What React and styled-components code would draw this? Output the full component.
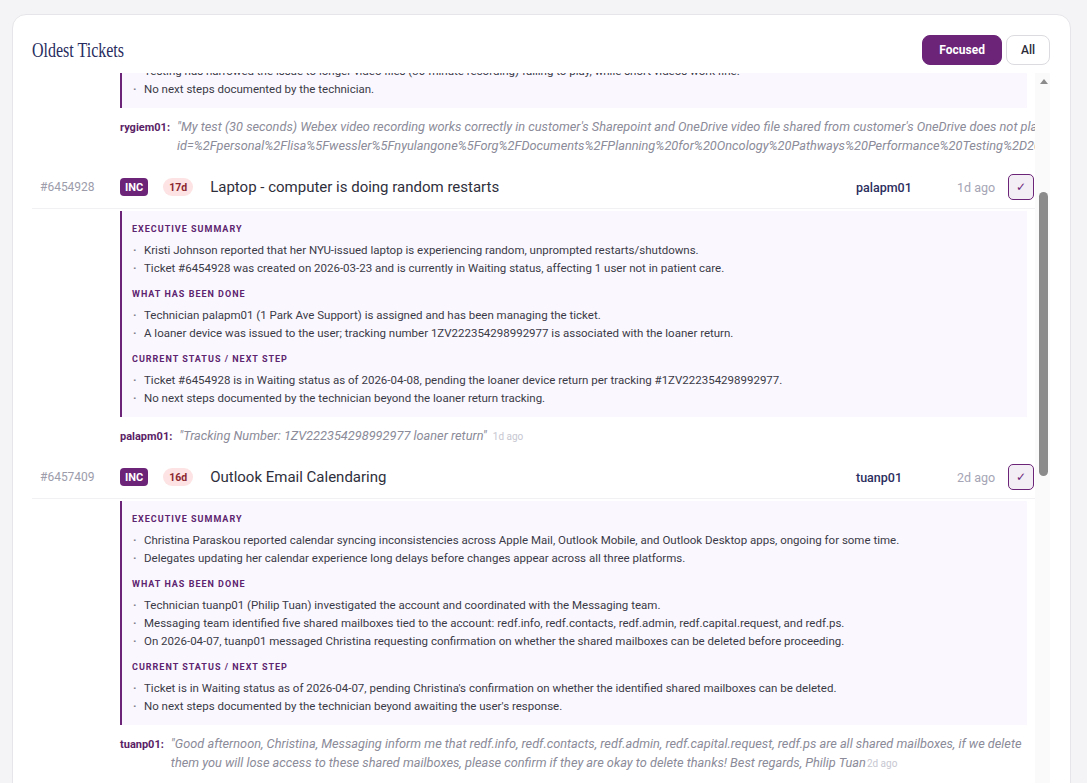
import React, { useLayoutEffect, useRef, useState } from 'react'
import styled, { createGlobalStyle } from 'styled-components'

const tickets = [
  {
    id: '#6449185',
    title: "Webex recordings won't play from shared OneDrive",
    age: '19d',
    assignee: 'rygiem01',
    ago: '1d ago',
    sections: [
      {
        title: 'Executive Summary',
        items: [
          'Lisa Wessler reported that Webex meeting recordings saved to OneDrive fail to play when shared with colleagues.',
          'Ticket #6449185 was created on 2026-03-21 and is currently in Waiting status, affecting 1 user not in patient care.',
          'The user needs the recordings for the Oncology Pathways performance testing project.',
        ],
      },
      {
        title: 'What Has Been Done',
        items: [
          'Technician rygiem01 (Web Conferencing Support) is assigned and has been managing the ticket.',
          "A test recording was shared from the technician's OneDrive and from the customer's OneDrive for comparison.",
          'Recordings were re-uploaded to SharePoint to rule out a file corruption issue.',
        ],
      },
      {
        title: 'Current Status / Next Step',
        items: [
          'Ticket #6449185 is in Waiting status as of 2026-04-08, pending further testing with the customer.',
          'Testing has narrowed the issue to longer video files (30-minute recording) failing to play, while short videos work fine.',
          'No next steps documented by the technician.',
        ],
      },
    ],
    comment: {
      author: 'rygiem01:',
      text: "\"My test (30 seconds) Webex video recording works correctly in customer's Sharepoint and OneDrive video file shared from customer's OneDrive does not play. id=%2Fpersonal%2Flisa%5Fwessler%5Fnyulangone%5Forg%2FDocuments%2FPlanning%20for%20Oncology%20Pathways%20Performance%20Testing%2D2026%2FRecordings%2FWebex%20Session%2030%20Minutes%2Emp4&parent=%2Fpersonal%2Flisa%5Fwessler%5Fnyulangone%5Forg%2FDocuments\"",
      ago: '1d ago',
    },
  },
  {
    id: '#6454928',
    title: 'Laptop - computer is doing random restarts',
    age: '17d',
    assignee: 'palapm01',
    ago: '1d ago',
    sections: [
      {
        title: 'Executive Summary',
        items: [
          'Kristi Johnson reported that her NYU-issued laptop is experiencing random, unprompted restarts/shutdowns.',
          'Ticket #6454928 was created on 2026-03-23 and is currently in Waiting status, affecting 1 user not in patient care.',
        ],
      },
      {
        title: 'What Has Been Done',
        items: [
          'Technician palapm01 (1 Park Ave Support) is assigned and has been managing the ticket.',
          'A loaner device was issued to the user; tracking number 1ZV222354298992977 is associated with the loaner return.',
        ],
      },
      {
        title: 'Current Status / Next Step',
        items: [
          'Ticket #6454928 is in Waiting status as of 2026-04-08, pending the loaner device return per tracking #1ZV222354298992977.',
          'No next steps documented by the technician beyond the loaner return tracking.',
        ],
      },
    ],
    comment: {
      author: 'palapm01:',
      text: '"Tracking Number: 1ZV222354298992977 loaner return"',
      ago: '1d ago',
      spaced: true,
    },
  },
  {
    id: '#6457409',
    title: 'Outlook Email Calendaring',
    age: '16d',
    assignee: 'tuanp01',
    ago: '2d ago',
    sections: [
      {
        title: 'Executive Summary',
        items: [
          'Christina Paraskou reported calendar syncing inconsistencies across Apple Mail, Outlook Mobile, and Outlook Desktop apps, ongoing for some time.',
          'Delegates updating her calendar experience long delays before changes appear across all three platforms.',
        ],
      },
      {
        title: 'What Has Been Done',
        items: [
          'Technician tuanp01 (Philip Tuan) investigated the account and coordinated with the Messaging team.',
          'Messaging team identified five shared mailboxes tied to the account: redf.info, redf.contacts, redf.admin, redf.capital.request, and redf.ps.',
          'On 2026-04-07, tuanp01 messaged Christina requesting confirmation on whether the shared mailboxes can be deleted before proceeding.',
        ],
      },
      {
        title: 'Current Status / Next Step',
        items: [
          "Ticket is in Waiting status as of 2026-04-07, pending Christina's confirmation on whether the identified shared mailboxes can be deleted.",
          "No next steps documented by the technician beyond awaiting the user's response.",
        ],
      },
    ],
    comment: {
      author: 'tuanp01:',
      text: '"Good afternoon, Christina, Messaging inform me that redf.info, redf.contacts, redf.admin, redf.capital.request, redf.ps are all shared mailboxes, if we delete them you will lose access to these shared mailboxes, please confirm if they are okay to delete thanks! Best regards, Philip Tuan',
      ago: '2d ago',
    },
  },
  {
    id: '#6458112',
    title: 'VPN disconnects every few minutes when working remotely',
    age: '15d',
    assignee: 'morend02',
    ago: '2d ago',
    sections: [
      {
        title: 'Executive Summary',
        items: [
          'Daniel Ortiz reported that his VPN session drops every few minutes while working from home.',
          'Ticket #6458112 was created on 2026-03-25 and is currently in Waiting status, affecting 1 user not in patient care.',
        ],
      },
      {
        title: 'What Has Been Done',
        items: [
          'Technician morend02 (Remote Access Support) reinstalled the VPN client and reset the network adapter.',
          'Logs were collected from the client and forwarded to the Network team for review.',
        ],
      },
      {
        title: 'Current Status / Next Step',
        items: [
          'Ticket #6458112 is in Waiting status as of 2026-04-08, pending review of the VPN logs by the Network team.',
          'No next steps documented by the technician.',
        ],
      },
    ],
    comment: {
      author: 'morend02:',
      text: '"Logs sent to Network team, will follow up once they respond."',
      ago: '2d ago',
      spaced: true,
    },
  },
  {
    id: '#6459034',
    title: 'Printer on 4th floor not picking up print jobs',
    age: '15d',
    assignee: 'chenk04',
    ago: '3d ago',
    sections: [
      {
        title: 'Executive Summary',
        items: [
          'Maria Lopez reported that the shared printer on the 4th floor does not pick up print jobs from her workstation.',
          'Ticket #6459034 was created on 2026-03-25 and is currently in Waiting status, affecting 3 users not in patient care.',
        ],
      },
      {
        title: 'What Has Been Done',
        items: [
          'Technician chenk04 (Desktop Support) re-mapped the printer and cleared the print queue.',
          'A replacement toner cartridge and fuser kit were ordered from the vendor.',
        ],
      },
      {
        title: 'Current Status / Next Step',
        items: [
          'Ticket #6459034 is in Waiting status as of 2026-04-06, pending delivery of the replacement parts.',
          'No next steps documented by the technician beyond the parts delivery.',
        ],
      },
    ],
    comment: {
      author: 'chenk04:',
      text: '"Parts ordered, ETA Friday."',
      ago: '3d ago',
      spaced: true,
    },
  },
  {
    id: '#6459870',
    title: 'Unable to access shared drive after password reset',
    age: '14d',
    assignee: 'okafoj01',
    ago: '4d ago',
    sections: [
      {
        title: 'Executive Summary',
        items: [
          'Robert Kim reported that he cannot open the department shared drive since resetting his password.',
          'Ticket #6459870 was created on 2026-03-26 and is currently in Waiting status, affecting 1 user not in patient care.',
        ],
      },
      {
        title: 'What Has Been Done',
        items: [
          'Technician okafoj01 (Service Desk) cleared cached credentials and re-mapped the drive.',
          'An access request was submitted to the drive owner to re-confirm group membership.',
        ],
      },
      {
        title: 'Current Status / Next Step',
        items: [
          'Ticket #6459870 is in Waiting status as of 2026-04-05, pending approval from the drive owner.',
          'No next steps documented by the technician.',
        ],
      },
    ],
    comment: {
      author: 'okafoj01:',
      text: '"Access request sent to drive owner for approval."',
      ago: '4d ago',
      spaced: true,
    },
  },
]

const ARROW = 15

export default function App() {
  const listRef = useRef(null)
  const anchorRef = useRef(null)
  const [thumb, setThumb] = useState({ top: ARROW, height: 0 })

  // open the list scrolled so the second ticket sits near the top,
  // then size the scrollbar thumb from the list's scroll metrics
  useLayoutEffect(() => {
    const list = listRef.current
    if (!list || !anchorRef.current) return
    list.scrollTop = anchorRef.current.offsetTop - 93
    const track = list.clientHeight - ARROW * 2
    setThumb({
      top: ARROW + (track * list.scrollTop) / list.scrollHeight,
      height: (track * list.clientHeight) / list.scrollHeight,
    })
  }, [])

  return (
    <>
      <GlobalStyle />
      <Page>
        <Card>
          <CardHeader>
            <Title>Oldest Tickets</Title>
            <Toggle>
              <ToggleButton active>Focused</ToggleButton>
              <ToggleButton>All</ToggleButton>
            </Toggle>
          </CardHeader>
          <ScrollArea>
            <TicketList ref={listRef}>
              {tickets.map((t, i) => (
                <Ticket key={t.id}>
                  <Row ref={i === 1 ? anchorRef : null}>
                    <TicketId>{t.id}</TicketId>
                    <TypeBadge>INC</TypeBadge>
                    <AgeBadge>{t.age}</AgeBadge>
                    <TicketTitle>{t.title}</TicketTitle>
                    <Assignee>{t.assignee}</Assignee>
                    <Ago>{t.ago}</Ago>
                    <CheckButton>✓</CheckButton>
                  </Row>
                  <Summary>
                    {t.sections.map((s) => (
                      <Section key={s.title}>
                        <SectionTitle>{s.title}</SectionTitle>
                        <Bullets>
                          {s.items.map((item) => (
                            <Bullet key={item}>{item}</Bullet>
                          ))}
                        </Bullets>
                      </Section>
                    ))}
                  </Summary>
                  <Comment>
                    <Author>{t.comment.author}</Author>
                    <Quote>
                      {t.comment.text}
                      <QuoteAgo spaced={t.comment.spaced}>{t.comment.ago}</QuoteAgo>
                    </Quote>
                  </Comment>
                </Ticket>
              ))}
            </TicketList>
            <ScrollTrack>
              <ScrollArrow />
              <ScrollThumb style={{ top: thumb.top, height: thumb.height }} />
              <ScrollArrow down />
            </ScrollTrack>
          </ScrollArea>
        </Card>
      </Page>
    </>
  )
}

const purple = '#6b2477'

const GlobalStyle = createGlobalStyle`
  html, body {
    margin: 0;
    height: 100%;
    overflow: hidden;
    background: #f4f4f6;
  }
  body {
    font-family: 'Roboto', 'Liberation Sans', sans-serif;
    color: #3b3b48;
  }
`

const Page = styled.div`
  padding: 14px 16px 0 12px;
`

const Card = styled.section`
  background: #fff;
  border: 1px solid #e6e6ea;
  border-radius: 14px;
  padding: 20px 20px 0 19px;
`

const CardHeader = styled.header`
  display: flex;
  align-items: center;
  justify-content: space-between;
  height: 30px;
  margin-bottom: 8px;
`

const Title = styled.h2`
  margin: 0;
  font-family: 'Liberation Serif', 'DejaVu Serif', serif;
  font-weight: 400;
  font-size: 20px;
  color: #282c5e;
  transform: scaleX(0.8);
  transform-origin: left center;
  white-space: nowrap;
`

const Toggle = styled.div`
  display: flex;
  gap: 4px;
`

const ToggleButton = styled.button`
  height: 30px;
  padding: 0 ${(p) => (p.active ? '16px' : '14px')};
  border-radius: 8px;
  border: 1px solid ${(p) => (p.active ? purple : '#dcdce0')};
  background: ${(p) => (p.active ? purple : '#fff')};
  color: ${(p) => (p.active ? '#fff' : '#2b2b38')};
  font-family: inherit;
  font-size: 12px;
  font-weight: ${(p) => (p.active ? 700 : 500)};
  cursor: pointer;
`

const ScrollArea = styled.div`
  display: flex;
  height: 740px;
`

const TicketList = styled.div`
  flex: 1;
  min-width: 0;
  position: relative;
  overflow-y: auto;
  overflow-x: hidden;
  scrollbar-width: none;
`

const ScrollTrack = styled.div`
  position: relative;
  width: 15px;
  flex-shrink: 0;
  display: flex;
  flex-direction: column;
  justify-content: space-between;
  background: #fafafa;
`

const ScrollArrow = styled.div`
  width: 0;
  height: 0;
  margin: ${(p) => (p.down ? '0 0 6px 5px' : '6px 0 0 5px')};
  border-left: 4px solid transparent;
  border-right: 4px solid transparent;
  ${(p) => (p.down ? 'border-top' : 'border-bottom')}: 5px solid #8b8b8b;
`

const ScrollThumb = styled.div`
  position: absolute;
  left: 4px;
  width: 9px;
  border-radius: 5px;
  background: #8b8b8b;
`

const Ticket = styled.article`
  display: flex;
  flex-direction: column;
`

const Row = styled.div`
  display: flex;
  align-items: center;
  height: 42px;
  padding: 0 1px 0 8px;
  border-bottom: 1px solid #f1f1f4;
`

const TicketId = styled.span`
  width: 80px;
  flex-shrink: 0;
  font-size: 12px;
  color: #9c9cab;
`

const TypeBadge = styled.span`
  display: inline-flex;
  align-items: center;
  height: 18px;
  padding: 0 5px;
  border-radius: 4px;
  background: ${purple};
  color: #fff;
  font-size: 11px;
  font-weight: 700;
  margin-right: 15px;
`

const AgeBadge = styled.span`
  display: inline-flex;
  align-items: center;
  height: 18px;
  padding: 0 6px;
  border-radius: 9px;
  background: #fde3e3;
  color: #8b2630;
  font-size: 10.5px;
  font-weight: 700;
  margin-right: 17px;
`

const TicketTitle = styled.span`
  flex: 1;
  font-size: 15px;
  color: #2f2f3c;
  white-space: nowrap;
  overflow: hidden;
  text-overflow: ellipsis;
`

const Assignee = styled.span`
  width: 101px;
  flex-shrink: 0;
  font-size: 12.5px;
  font-weight: 500;
  color: #2c2e5e;
`

const Ago = styled.span`
  width: 51px;
  flex-shrink: 0;
  font-size: 12.5px;
  color: #a5a5b5;
`

const CheckButton = styled.button`
  width: 26px;
  height: 26px;
  padding: 0;
  flex-shrink: 0;
  border: 1.5px solid ${purple};
  border-radius: 5px;
  background: #f3eef5;
  color: ${purple};
  font-family: 'DejaVu Sans', sans-serif;
  font-size: 12px;
  cursor: pointer;
`

const Summary = styled.div`
  margin: 2px 8px 0 88px;
  padding: 11px 12px 10px 10px;
  background: #faf8fe;
  border-left: 2px solid ${purple};
  display: flex;
  flex-direction: column;
  gap: 10px;
`

const Section = styled.div``

const SectionTitle = styled.div`
  font-size: 9px;
  line-height: 14px;
  font-weight: 700;
  letter-spacing: 1px;
  text-transform: uppercase;
  color: #5e2470;
  margin-bottom: 5px;
`

const Bullets = styled.ul`
  list-style: none;
  margin: 0;
  padding: 0;
`

const Bullet = styled.li`
  display: flex;
  font-size: 11.5px;
  line-height: 18px;
  color: #3a3a47;

  &::before {
    content: '·';
    width: 11px;
    flex-shrink: 0;
    color: #7c7c88;
    font-weight: 700;
    padding-left: 1px;
  }
`

const Comment = styled.div`
  display: flex;
  align-items: baseline;
  margin-left: 88px;
  padding: 9px 0 10px;
`

const Author = styled.span`
  flex-shrink: 0;
  margin-right: 7px;
  font-size: 11px;
  font-weight: 700;
  color: #5a1e66;
`

const Quote = styled.span`
  font-size: 12.75px;
  line-height: 19px;
  font-style: italic;
  color: #8b8b99;
`

const QuoteAgo = styled.span`
  margin-left: ${(p) => (p.spaced ? '6px' : '1px')};
  font-size: 10px;
  font-style: normal;
  color: #c7c7d1;
  white-space: nowrap;
`
